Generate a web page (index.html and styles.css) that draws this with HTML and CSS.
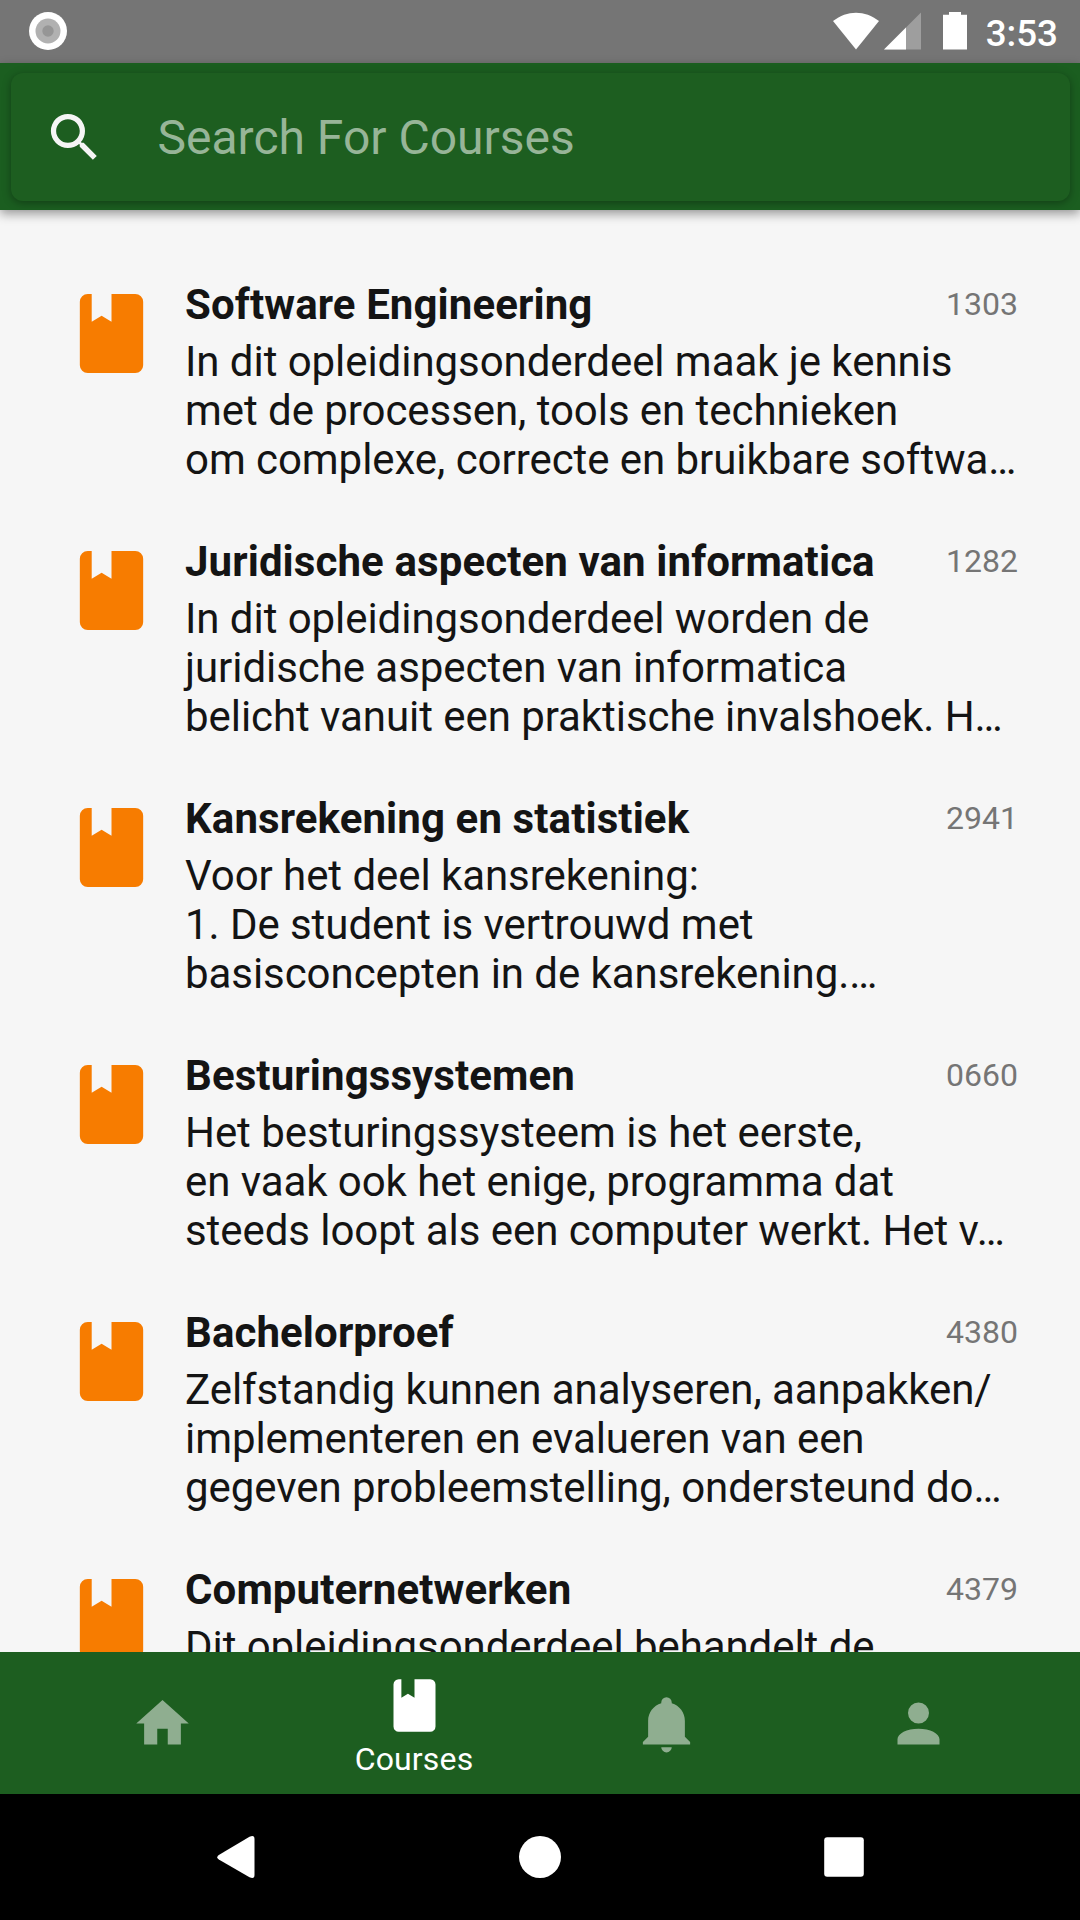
FILE: index.html
```html
<!DOCTYPE html>
<html lang="nl">
<head>
<meta charset="utf-8">
<title>Courses</title>
<link rel="stylesheet" href="styles.css">
</head>
<body>
<svg class="defs" aria-hidden="true">
  <symbol id="book" viewBox="0 0 24 24"><path d="M18 22a2 2 0 0 0 2-2V4a2 2 0 0 0-2-2h-6v7L9.500 7.500 7 9V2H6a2 2 0 0 0-2 2v16a2 2 0 0 0 2 2z"/></symbol>
</svg>
<div class="screen">
  <div class="status">
    <svg class="record" viewBox="0 0 38 38"><circle cx="19" cy="19" r="19" fill="#fff"/><circle cx="19" cy="19" r="12.500" fill="#b1b1b1"/><circle cx="19" cy="19" r="5.700" fill="#969696"/></svg>
    <svg class="signals" viewBox="0 0 135 38">
      <path d="M0 9C14-2.100 32-2.100 46 9L23 37.500z"/>
      <path d="M51 37.500 88 .5v37z" opacity=".3"/>
      <path d="M51 37.500 73 15.500v22z"/>
      <path d="M116 0h12v2.700h6v34.800h-24V2.700h6z"/>
    </svg>
    <span class="time">3:53</span>
  </div>
  <header class="header">
    <div class="search">
      <svg class="search-icon" viewBox="0 0 24 24"><path d="M15.500 14h-.79l-.28-.27A6.470 6.470 0 0 0 16 9.500 6.500 6.500 0 1 0 9.500 16c1.610 0 3.090-.59 4.230-1.570l.27.28v.79l5 4.990L20.490 19l-4.990-5zm-6 0C7.010 14 5 11.990 5 9.500S7.010 5 9.500 5 14 7.010 14 9.500 11.990 14 9.500 14z"/></svg>
      <span class="placeholder">Search For Courses</span>
    </div>
  </header>
  <main class="list">
    <article class="course">
      <svg class="course-icon"><use href="#book"/></svg>
      <div class="text"><h2>Software Engineering</h2><p>In dit opleidingsonderdeel maak je kennis<br>met de processen, tools en technieken<br>om complexe, correcte en bruikbare softwa…</p></div>
      <span class="code">1303</span>
    </article>
    <article class="course">
      <svg class="course-icon"><use href="#book"/></svg>
      <div class="text"><h2>Juridische aspecten van informatica</h2><p>In dit opleidingsonderdeel worden de<br>juridische aspecten van informatica<br>belicht vanuit een praktische invalshoek. H…</p></div>
      <span class="code">1282</span>
    </article>
    <article class="course">
      <svg class="course-icon"><use href="#book"/></svg>
      <div class="text"><h2>Kansrekening en statistiek</h2><p>Voor het deel kansrekening:<br>1. De student is vertrouwd met<br>basisconcepten in de kansrekening.…</p></div>
      <span class="code">2941</span>
    </article>
    <article class="course">
      <svg class="course-icon"><use href="#book"/></svg>
      <div class="text"><h2>Besturingssystemen</h2><p>Het besturingssysteem is het eerste,<br>en vaak ook het enige, programma dat<br>steeds loopt als een computer werkt. Het v…</p></div>
      <span class="code">0660</span>
    </article>
    <article class="course">
      <svg class="course-icon"><use href="#book"/></svg>
      <div class="text"><h2>Bachelorproef</h2><p>Zelfstandig kunnen analyseren, aanpakken/<br>implementeren en evalueren van een<br>gegeven probleemstelling, ondersteund do…</p></div>
      <span class="code">4380</span>
    </article>
    <article class="course">
      <svg class="course-icon"><use href="#book"/></svg>
      <div class="text"><h2>Computernetwerken</h2><p>Dit opleidingsonderdeel behandelt de</p></div>
      <span class="code">4379</span>
    </article>
  </main>
  <nav class="tabs">
    <div class="tab"><svg viewBox="0 0 24 24"><path d="M10 20v-6h4v6h5v-8h3L12 3 2 12h3v8z"/></svg></div>
    <div class="tab active"><svg><use href="#book"/></svg><span>Courses</span></div>
    <div class="tab"><svg viewBox="0 0 24 24"><path d="M21 19v1H3v-1l2-2v-6c0-3.100 2.030-5.830 5-6.710V4a2 2 0 0 1 4 0v.29c2.970.88 5 3.610 5 6.710v6zm-7 2a2 2 0 0 1-4 0z"/></svg></div>
    <div class="tab"><svg viewBox="0 0 24 24"><path d="M12 4a4 4 0 1 1 0 8 4 4 0 0 1 0-8zm0 10c4.420 0 8 1.790 8 4v2H4v-2c0-2.210 3.580-4 8-4z"/></svg></div>
  </nav>
  <div class="system">
    <svg viewBox="0 0 42 42"><path d="M3.800 19 34.500 .8Q39.500-1.500 39.500 3v36q0 4.500-5 2.200L3.800 23.500Q.8 21.200 3.800 19z"/></svg>
    <svg viewBox="0 0 42 42"><circle cx="21" cy="21" r="21"/></svg>
    <svg viewBox="0 0 42 42"><rect x="1.200" y="1.200" width="39.600" height="39.600" rx="3"/></svg>
  </div>
</div>
</body>
</html>
```

FILE: styles.css
```css
* { box-sizing: border-box; margin: 0; padding: 0; }
body { font-family: Roboto, sans-serif; background: #f6f6f6; }
svg { display: block; fill: currentColor; flex: none; }
.defs { position: absolute; width: 0; height: 0; }

.screen { width: 1080px; height: 1920px; display: flex; flex-direction: column; overflow: hidden; }

.status { height: 63px; flex: none; background: #757575; color: #fff; display: flex; align-items: flex-start; padding: 12px 22px 0 28.500px; }
.record { width: 38px; height: 38px; }
.signals { width: 135px; height: 38px; margin-left: auto; }
.time { font-size: 36.750px; font-weight: 500; line-height: 43px; margin-left: 18px; }

.header { height: 147px; flex: none; background: #1b5e20; padding: 10px 10px 9px 11px; box-shadow: 0 4px 10px rgba(0, 0, 0, .38); z-index: 1; }
.search { height: 128px; border-radius: 12px; background: #1d5e20; display: flex; align-items: center; padding-left: 31.500px; gap: 52px; color: #f5f5f5; box-shadow: 0 2px 9px rgba(0, 0, 0, .34); }
.search-icon { width: 63px; height: 63px; }
.placeholder { font-size: 48px; line-height: 56px; padding-top: 2px; color: #97b598; }

.list { flex: 1; min-height: 0; overflow: hidden; padding-top: 42px; }
.course { height: 257.100px; display: flex; padding: 28px 62px 0 64px; color: #141414; white-space: nowrap; }
.course-icon { width: 95px; height: 95px; margin-top: 6px; color: #f77c00; }
.text { flex: 1; min-width: 0; margin-left: 26px; }
.text h2, .text p { font-size: 42px; line-height: 49px; }
.text h2 { font-weight: 700; letter-spacing: .1px; }
.text p { margin-top: 8px; letter-spacing: -.06px; }
.code { font-size: 32px; line-height: 37px; margin-top: 6px; color: #757575; }

.tabs { height: 142px; flex: none; background: #1d5e20; display: flex; padding: 0 36px; color: #8fae90; }
.tab { flex: 1; display: flex; flex-direction: column; align-items: center; justify-content: center; }
.tab svg { width: 63px; height: 63px; }
.tab.active { color: #fff; justify-content: flex-start; padding-top: 21.750px; }
.tab span { font-size: 32px; letter-spacing: .15px; line-height: 37px; margin-top: 4px; }

.system { height: 126px; flex: none; background: #000; color: #fff; display: flex; justify-content: center; align-items: center; gap: 262px; }
.system svg { width: 42px; height: 42px; }
```
